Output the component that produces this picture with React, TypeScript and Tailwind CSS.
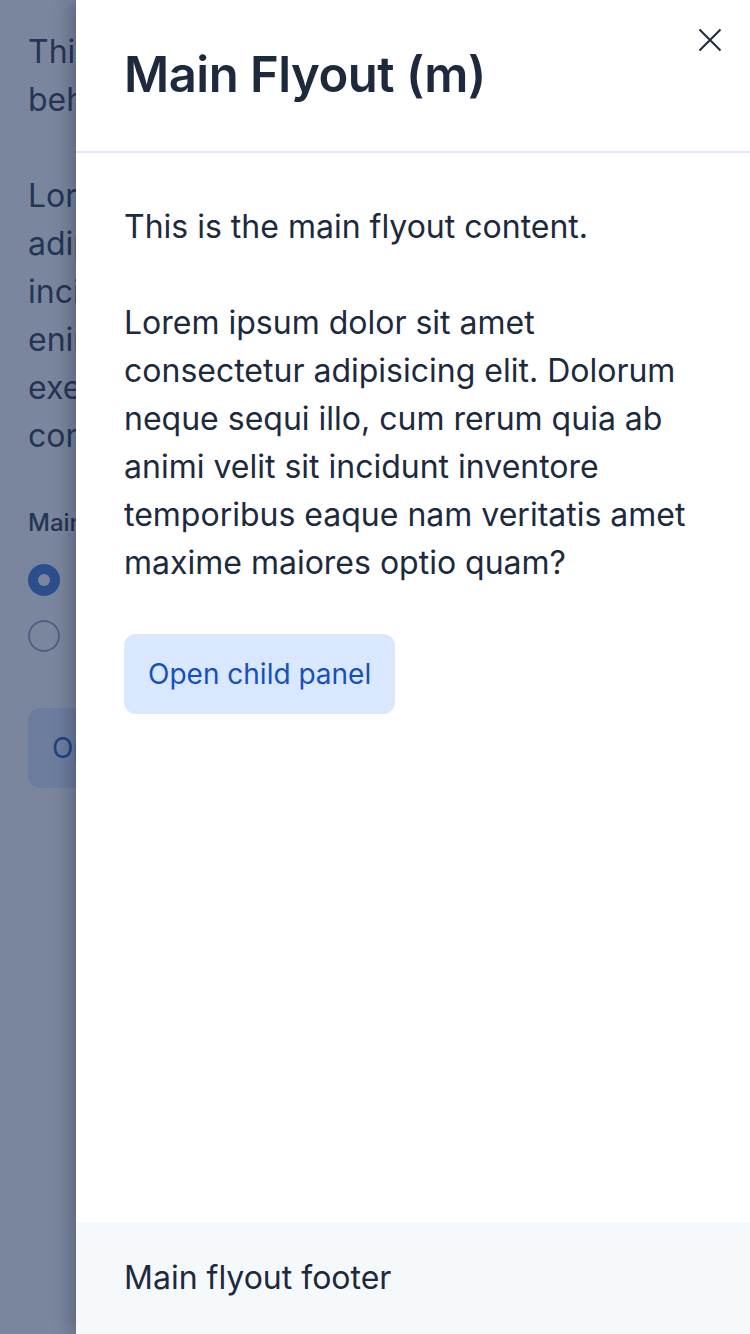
import React from 'react';

const font = { fontFamily: 'Inter, "Noto Sans", sans-serif' };

// the page under the flyout; only its left strip is ever visible
const PageBehind: React.FC = () => (
  <div className="h-full w-[76px] overflow-hidden">
    <div className="w-[750px] whitespace-nowrap px-[28px] pt-[28px] text-[32px] leading-[48px] text-[#1d2a3e]">
      <p>
        This is the page content that sits
        <br />
        behind the flyouts.
      </p>
      <p className="mt-[48px]">
        Lorem ipsum dolor sit amet consectetur
        <br />
        adipisicing elit. Quisquam voluptates
        <br />
        incidunt laudantium, quas nostrum
        <br />
        enim voluptatem aperiam molestias
        <br />
        exercitationem ipsa magni eius
        <br />
        consequatur ratione.
      </p>
      <div className="mt-[45px] text-[24px] leading-[36px] font-medium">Main flyout type</div>
      <div className="mt-[23px] flex flex-col gap-[24px]">
        <label className="flex items-center gap-[16px] leading-[32px]">
          <span className="flex h-[32px] w-[32px] items-center justify-center rounded-full bg-[#2e6fd0]">
            <span className="h-[12px] w-[12px] rounded-full bg-white" />
          </span>
          <span className="text-[28px]">Overlay</span>
        </label>
        <label className="flex items-center gap-[16px] leading-[32px]">
          <span className="h-[32px] w-[32px] rounded-full border-2 border-[#8e9fbc] bg-white" />
          <span className="text-[28px]">Push</span>
        </label>
      </div>
      <button className="mt-[56px] h-[80px] rounded-[12px] bg-[#d9e8ff] px-[24px] text-[28px] text-[#1750ba]">
        Open main flyout
      </button>
    </div>
  </div>
);

const CloseIcon: React.FC = () => (
  <svg width="24" height="24" viewBox="0 0 24 24" fill="none" stroke="#1d2a3e" strokeWidth="2">
    <path d="M1.5 1.5 L22.5 22.5 M22.5 1.5 L1.5 22.5" />
  </svg>
);

export default function App() {
  return (
    <div className="relative h-[1334px] w-[750px] overflow-hidden bg-white" style={font}>
      <PageBehind />

      {/* mask */}
      <div className="absolute inset-0 bg-[rgba(40,60,98,0.62)]" />

      {/* flyout */}
      <div className="absolute top-0 right-0 bottom-0 flex w-[674px] flex-col bg-white shadow-[-6px_0_16px_rgba(7,16,31,0.25)]">
        <button className="absolute top-[16px] right-[16px] flex h-[48px] w-[48px] items-center justify-center">
          <CloseIcon />
        </button>

        <div className="border-b-2 border-[#e3e8f2] px-[48px] pt-[39px] pb-[40px]">
          <h2 className="text-[49px] leading-[72px] font-semibold tracking-[-0.5px] text-[#1d2a3e]">Main Flyout (m)</h2>
        </div>

        <div className="flex-1 px-[48px] pt-[50px] text-[32px] leading-[48px] text-[#1d2a3e]">
          <p>This is the main flyout content.</p>
          <p className="mt-[48px]">
            Lorem ipsum dolor sit amet consectetur adipisicing elit. Dolorum neque sequi illo, cum rerum quia ab animi
            velit sit incidunt inventore temporibus eaque nam veritatis amet maxime maiores optio quam?
          </p>
          <button className="mt-[47px] h-[80px] rounded-[12px] bg-[#d9e8ff] px-[24px] text-[28px] text-[#1750ba]">
            Open child panel
          </button>
        </div>

        <div className="bg-[#f6f9fc] px-[48px] py-[32px] text-[32px] leading-[48px] text-[#1d2a3e]">
          Main flyout footer
        </div>
      </div>
    </div>
  );
}
